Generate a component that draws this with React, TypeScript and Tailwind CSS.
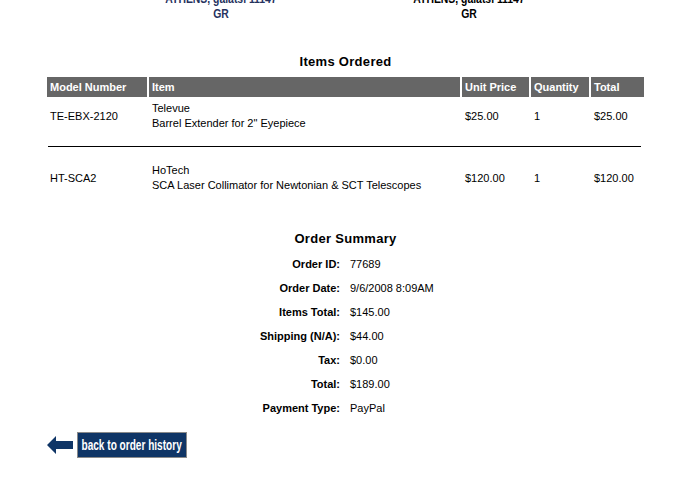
const items = [
  { model: "TE-EBX-2120", brand: "Televue", name: "Barrel Extender for 2\" Eyepiece", price: "$25.00", qty: "1", total: "$25.00" },
  { model: "HT-SCA2", brand: "HoTech", name: "SCA Laser Collimator for Newtonian & SCT Telescopes", price: "$120.00", qty: "1", total: "$120.00" },
];

const summary: [string, string][] = [
  ["Order ID:", "77689"],
  ["Order Date:", "9/6/2008 8:09AM"],
  ["Items Total:", "$145.00"],
  ["Shipping (N/A):", "$44.00"],
  ["Tax:", "$0.00"],
  ["Total:", "$189.00"],
  ["Payment Type:", "PayPal"],
];

const cols = "grid grid-cols-[100px_311px_67px_58px_53px] gap-x-[2px]";

export default function App() {
  return (
    <div className="w-[691px] h-[481px] overflow-hidden bg-white text-[11px] text-black font-['Liberation_Sans',Arial,sans-serif]">
      {/* addresses, top clipped by the window */}
      <div className="flex mt-[-9px] font-bold text-[13px] leading-[15px]">
        <div className="w-[146px]" />
        <div className="w-[150px] text-center text-[#26325e] scale-x-[0.8]">
          <div>ATHENS, galatsi 11147</div>
          <div>GR</div>
        </div>
        <div className="w-[98px]" />
        <div className="w-[150px] text-center scale-x-[0.8]">
          <div>ATHENS, galatsi 11147</div>
          <div>GR</div>
        </div>
      </div>

      <div className="mt-[33px] text-center font-bold text-[13px] leading-[16px] tracking-[0.3px]">Items Ordered</div>

      <div className="ml-[47px] mt-[7px] w-[597px]">
        <div className={`${cols} h-[20px] font-bold text-white`}>
          {["Model Number", "Item", "Unit Price", "Quantity", "Total"].map((h) => (
            <div key={h} className="bg-[#666666] pl-[3px] leading-[20px]">{h}</div>
          ))}
        </div>
        {items.map((it, i) => (
          <div key={it.model}>
            {i > 0 && <div className="ml-[1px] w-[593px] h-px bg-black" />}
            <div className={`${cols} items-center leading-[15px] ${i === 0 ? "pt-[4px] pb-[15px]" : "pt-[16px] pb-[8px]"}`}>
              <div className="pl-[3px]">{it.model}</div>
              <div className="pl-[3px]">
                <div>{it.brand}</div>
                <div>{it.name}</div>
              </div>
              <div className="pl-[3px]">{it.price}</div>
              <div className="pl-[3px]">{it.qty}</div>
              <div className="pl-[3px]">{it.total}</div>
            </div>
          </div>
        ))}
      </div>

      <div className="mt-[30px] text-center font-bold text-[13px] leading-[16px] tracking-[0.3px]">Order Summary</div>

      <div className="mt-[5px] grid grid-cols-[340px_1fr] gap-x-[10px] leading-[24px]">
        {summary.map(([k, v]) => (
          <div key={k} className="contents">
            <div className="text-right font-bold">{k}</div>
            <div>{v}</div>
          </div>
        ))}
      </div>

      <div className="mt-[12px] ml-[47px] flex items-center gap-[4px]">
        <svg width="26" height="18" viewBox="0 0 26 18">
          <path d="M0 9 L9 0 L9 5 L26 5 L26 13 L9 13 L9 18 Z" fill="#0f3566" />
        </svg>
        <div className="h-[26px] w-[110px] border border-[#8a8a8a] bg-[#0f3566] flex items-center justify-center overflow-hidden">
          <span className="inline-block whitespace-nowrap text-white font-bold text-[14px] leading-[24px] scale-x-[0.72]">
            back to order history
          </span>
        </div>
      </div>
    </div>
  );
}
